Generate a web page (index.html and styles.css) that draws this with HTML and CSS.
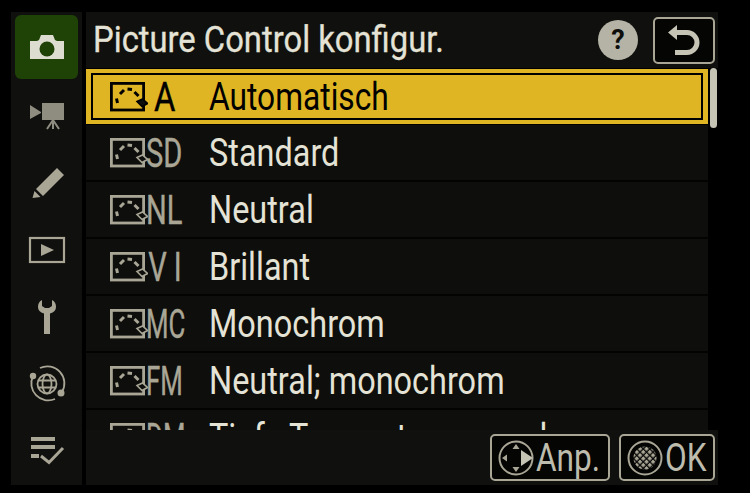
FILE: index.html
```html
<!DOCTYPE html>
<html lang="de">
<head>
<meta charset="UTF-8">
<meta name="viewport" content="width=device-width, initial-scale=1.0">
<title>Picture Control konfigur.</title>
<link rel="stylesheet" href="styles.css">
</head>
<body>

<svg class="defs" width="0" height="0">
  <defs>
    <symbol id="pc" viewBox="0 0 38 30">
      <rect x="1.4" y="1.4" width="32.2" height="26.6" fill="none" stroke="currentColor" stroke-width="2.8"/>
      <path d="M7.5 21L6.500 16.500M10 12l4-4M17.500 7l4.500.5M24.500 10l4 4" fill="none" stroke="currentColor" stroke-width="3"/>
      <polygon class="pc-mark" points="27,19.5 32.500,17 37.500,21.500 32,24.500" stroke-width="1.6"/>
    </symbol>
    <pattern id="hatch" width="4.6" height="4.6" patternUnits="userSpaceOnUse" patternTransform="rotate(45)">
      <rect width="3.3" height="3.3" fill="#a9a696"/>
    </pattern>
  </defs>
</svg>

<div class="screen">

  <!-- Menu tabs -->
  <nav class="tabs">
    <div class="tab active">
      <svg viewBox="0 0 40 40"><path d="M3 14h7l2-1 2-5h12l2 5 2 1h7v18H3z" fill="#dddcd0"/><circle cx="20" cy="22" r="7.5" fill="#1f4207"/></svg>
    </div>
    <div class="tab">
      <svg viewBox="0 0 40 40"><path d="M3 9l11 7v1L3 23zM15 7h22v17H15z" fill="#8f8d80"/><path d="M26 24l-6 9M26 24v9M26 24l6 9" stroke="#8f8d80" stroke-width="2"/></svg>
    </div>
    <div class="tab">
      <svg viewBox="0 0 40 40"><path d="M9 26L30 5l7 7-21 21zM5.500 35l2-7 6 6z" fill="#a9a696"/></svg>
    </div>
    <div class="tab">
      <svg viewBox="0 0 40 40"><rect x="3" y="8" width="34" height="24" fill="none" stroke="#a9a696" stroke-width="2.2"/><path d="M14 14l13 6-13 6z" fill="#a9a696"/></svg>
    </div>
    <div class="tab">
      <svg viewBox="0 0 40 40"><path d="M15 3c-3 1.500-4 4-4 7 0 3 2 5.500 6 6.500V37h6V16.500c4-1 6-3.500 6-6.500 0-3-1-5.500-4-7v6l-3 2h-4l-3-2z" fill="#a9a696"/></svg>
    </div>
    <div class="tab">
      <svg viewBox="0 0 40 40" fill="none" stroke="#a9a696" stroke-width="1.8">
        <path d="M6 12A17 17 0 0 0 28 35M13 4A17 17 0 0 1 35 28"/>
        <circle cx="6" cy="12" r="3.200" fill="#a9a696" stroke="none"/>
        <circle cx="34" cy="29" r="3.500" fill="#a9a696" stroke="none"/>
        <circle cx="20" cy="20" r="9.500"/>
        <ellipse cx="20" cy="20" rx="4.500" ry="9.500"/>
        <path d="M11 16.500h18M11 23.500h18"/>
      </svg>
    </div>
    <div class="tab">
      <svg viewBox="0 0 40 40"><path d="M4 6h24v4H4zM4 14h24v4H4zM4 23h8v4H4z" fill="#a9a696"/><path d="M14 25l8 6.500L36 17" fill="none" stroke="#a9a696" stroke-width="3"/></svg>
    </div>
  </nav>

  <main class="panel">
    <header class="title-bar">
      <h1><span class="squeeze">Picture Control konfigur.</span></h1>
      <span class="help">?</span>
      <span class="back">
        <svg viewBox="0 0 40 30" width="40" height="30"><path d="M13 7.500h10a10 10 0 0 1 0 20H11" fill="none" stroke="#c5c4b5" stroke-width="5"/><path d="M4 7.500L13 0v15z" fill="#c5c4b5"/></svg>
      </span>
    </header>

    <div class="body">
      <ul class="list">
        <li class="row selected">
          <svg class="pc"><use href="#pc"/></svg><span class="code wide">A</span><span class="label">Automatisch</span>
        </li>
        <li class="row">
          <svg class="pc"><use href="#pc"/></svg><span class="code">SD</span><span class="label">Standard</span>
        </li>
        <li class="row">
          <svg class="pc"><use href="#pc"/></svg><span class="code">NL</span><span class="label">Neutral</span>
        </li>
        <li class="row">
          <svg class="pc"><use href="#pc"/></svg><span class="code spaced">VI</span><span class="label">Brillant</span>
        </li>
        <li class="row">
          <svg class="pc"><use href="#pc"/></svg><span class="code tight">MC</span><span class="label">Monochrom</span>
        </li>
        <li class="row">
          <svg class="pc"><use href="#pc"/></svg><span class="code tight">FM</span><span class="label">Neutral; monochrom</span>
        </li>
        <li class="row">
          <svg class="pc"><use href="#pc"/></svg><span class="code tight">DM</span><span class="label">Tiefe Tonwerte; monochrom</span>
        </li>
      </ul>
      <div class="scroll"><div class="thumb"></div></div>
    </div>

    <footer class="foot">
      <span class="key key-anp">
        <svg viewBox="0 0 36 36" width="36" height="36">
          <circle cx="18" cy="18" r="16.500" fill="none" stroke="#a9a696" stroke-width="2"/>
          <path d="M18 4l3.500 5h-7zM18 32l3.500-5h-7zM4 18l5-3.500v7z" fill="#a9a696"/>
          <path d="M23 10l12 8-12 8z" fill="#c5c4b5"/>
        </svg>
        <span class="key-text">Anp.</span>
      </span>
      <span class="key key-ok">
        <svg viewBox="0 0 36 36" width="36" height="36">
          <circle cx="18" cy="18" r="16.500" fill="none" stroke="#a9a696" stroke-width="2"/>
          <circle cx="18" cy="18" r="11.500" fill="url(#hatch)"/>
        </svg>
        <span class="key-text">OK</span>
      </span>
    </footer>
  </main>
</div>

</body>
</html>
```

FILE: styles.css
```css
/* Reset */
* {
  margin: 0;
  padding: 0;
  box-sizing: border-box;
}
html, body {
  height: 100%;
  overflow: hidden;
  background: #000;
  font-family: Roboto, "Noto Sans", sans-serif;
}
.defs {
  position: absolute;
}

.screen {
  display: flex;
  gap: 4px;
  width: 707px;
  height: 473px;
  margin: 12px 0 0 11px;
}

/* Left tabs */
.tabs {
  width: 71px;
  flex: none;
  background: #10100e;
  padding-top: 3px;
  display: flex;
  flex-direction: column;
  align-items: center;
}
.tab {
  width: 63px;
  height: 67px;
  flex: none;
  display: flex;
  align-items: center;
  justify-content: center;
}
.tab.active {
  height: 64px;
  margin-bottom: 3px;
  background: #1f4207;
  border-radius: 6px;
}
.tab svg {
  width: 40px;
  height: 40px;
}

/* Right side */
.panel {
  flex: 1;
  min-width: 0;
  display: flex;
  flex-direction: column;
}
.title-bar {
  height: 56px;
  flex: none;
  background: #10100e;
  display: flex;
  align-items: center;
  padding-left: 7px;
  padding-right: 3px;
  color: #e4e3d6;
}
.title-bar h1 {
  flex: 1;
  min-width: 0;
  font-size: 36px;
  font-weight: 400;
  white-space: nowrap;
}
.squeeze {
  display: inline-block;
  transform: scaleX(.91);
  transform-origin: left center;
  -webkit-text-stroke: .3px #e4e3d6;
}
.help {
  width: 40px;
  height: 40px;
  margin-right: 15px;
  border-radius: 50%;
  background: #b4b3a5;
  color: #0d0d0b;
  font-size: 27px;
  font-weight: 700;
  line-height: 40px;
  text-align: center;
}
.back {
  width: 62px;
  height: 47px;
  border: 2px solid #a9a696;
  border-radius: 5px;
  background: #050504;
  display: flex;
  align-items: center;
  justify-content: center;
}

.body {
  height: 362px;
  flex: none;
  display: flex;
  overflow: hidden;
}
.list {
  width: 622px;
  flex: none;
  list-style: none;
}
.row {
  height: 57px;
  display: flex;
  align-items: center;
  padding-left: 24px;
  background: #0e0e0c;
  border-bottom: 2px solid #030302;
  color: #a9a696;
  position: relative;
}
.pc {
  width: 38px;
  height: 30px;
  flex: none;
  margin-right: -2px;
  color: #a9a696;
}
.pc-mark {
  fill: #0e0e0c;
  stroke: currentColor;
}
.code {
  width: 63px;
  flex: none;
  font-size: 41px;
  white-space: nowrap;
  display: inline-block;
  transform: scaleX(.71);
  transform-origin: left center;
  -webkit-text-stroke: .4px currentColor;
}
.code.tight {
  transform: scaleX(.63);
}
.code.wide {
  transform: scaleX(.8);
  padding-left: 10px;
}
.code.spaced {
  letter-spacing: 10px;
  padding-left: 3px;
}
.label {
  display: inline-block;
  font-size: 38px;
  color: #e4e3d6;
  white-space: nowrap;
  transform: scaleX(.854);
  transform-origin: left center;
}

.row.selected {
  height: 55px;
  margin: 1px 0;
  background: #dfb524;
  border: 0;
  color: #000;
}
.row.selected::after {
  content: "";
  position: absolute;
  inset: 4px 5px;
  border: 2px solid #000;
}
.row.selected .pc {
  color: #000;
}
.row.selected .pc-mark {
  fill: #eedc9a;
}
.row.selected .label {
  color: #000;
  transform: scaleX(.835);
}

.scroll {
  flex: 1;
  padding: 0 2px;
}
.thumb {
  width: 7px;
  height: 60px;
  background: #c5c4b5;
  border-radius: 4px;
}

/* Bottom keys */
.foot {
  flex: 1;
  background: #10100e;
  display: flex;
  justify-content: flex-end;
  align-items: center;
  gap: 9px;
  padding-right: 3px;
}
.key {
  height: 47px;
  border: 2px solid #a9a696;
  border-radius: 5px;
  background: #050504;
  display: flex;
  align-items: center;
  color: #bdbcad;
  padding-left: 6px;
  overflow: hidden;
}
.key svg {
  flex: none;
}
.key-anp {
  width: 120px;
}
.key-ok {
  width: 96px;
}
.key-text {
  flex: none;
  font-size: 39px;
  display: inline-block;
  transform: scaleX(.81);
  transform-origin: left center;
  margin-left: 2px;
  margin-right: -20px;
}
```
